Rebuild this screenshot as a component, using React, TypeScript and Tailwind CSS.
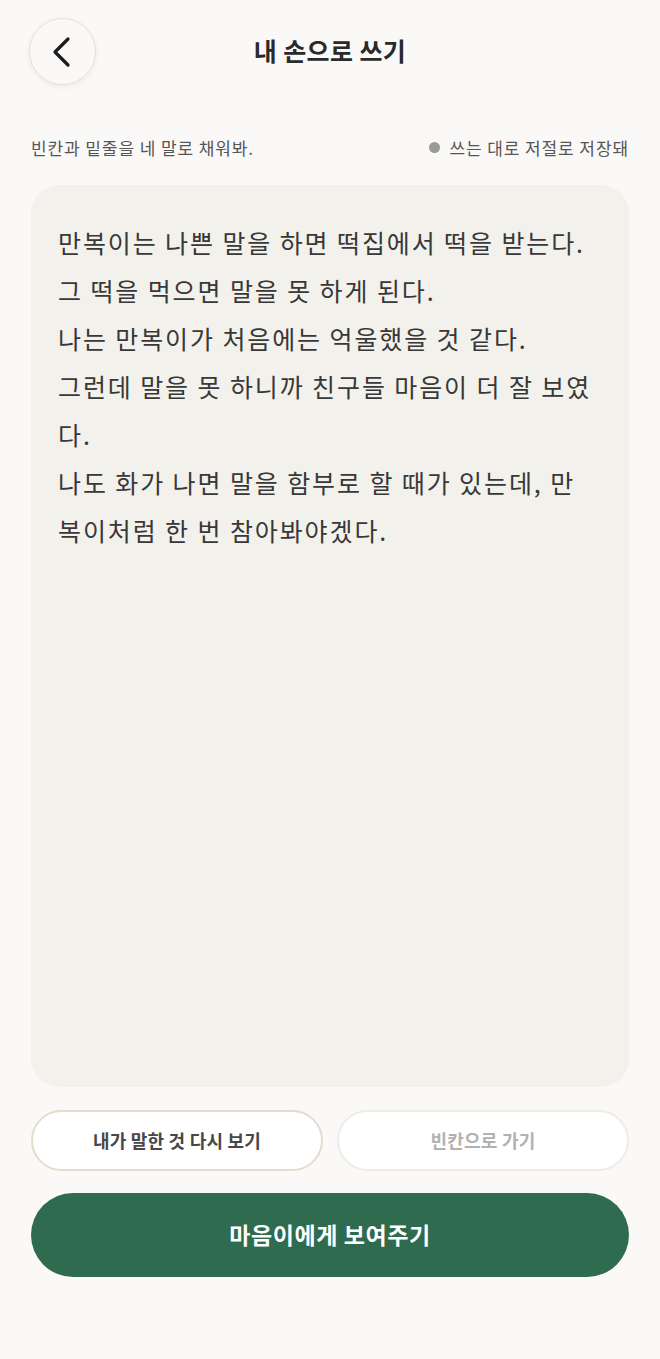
import { useState } from "react";

const INITIAL_TEXT = [
  "만복이는 나쁜 말을 하면 떡집에서 떡을 받는다.",
  "그 떡을 먹으면 말을 못 하게 된다.",
  "나는 만복이가 처음에는 억울했을 것 같다.",
  "그런데 말을 못 하니까 친구들 마음이 더 잘 보였다.",
  "나도 화가 나면 말을 함부로 할 때가 있는데, 만복이처럼 한 번 참아봐야겠다.",
].join("\n");

const FONT = { fontFamily: '"Noto Sans CJK KR", "Noto Sans", sans-serif' };

export default function App() {
  const [text, setText] = useState(INITIAL_TEXT);

  return (
    <div className="flex min-h-[1359px] flex-col bg-[#faf9f7] px-[31px] text-[#2b2b2b]" style={FONT}>
      <header className="relative flex h-[102px] items-center justify-center">
        <button
          type="button"
          aria-label="뒤로"
          className="absolute left-[-2px] top-[18px] flex h-[67px] w-[67px] items-center justify-center rounded-full border border-[#e4e1dc] bg-[#faf9f7] shadow-[0_2px_6px_rgba(0,0,0,0.06)]"
        >
          <svg width="20" height="32" viewBox="0 0 20 32" fill="none" stroke="#1c1c1c" strokeWidth="3.2" strokeLinecap="round" strokeLinejoin="round" className="mr-[2px]">
            <path d="M16 3 3 16l13 13" />
          </svg>
        </button>
        <h1 className="text-[25px] font-bold tracking-[0.4px] text-[#2a2a2a]">내 손으로 쓰기</h1>
      </header>

      <div className="mt-[33px] flex items-center justify-between text-[17px] tracking-[0.9px] text-[#555]">
        <p>빈칸과 밑줄을 네 말로 채워봐.</p>
        <p className="flex items-center gap-[9px]">
          <span className="h-[11px] w-[11px] rounded-full bg-[#9a9a98]" />
          쓰는 대로 저절로 저장돼
        </p>
      </div>

      <textarea
        value={text}
        onChange={(e) => setText(e.target.value)}
        className="mt-[24px] h-[902px] w-full resize-none rounded-[28px] bg-[#f3f1ec] py-[33px] pl-[27px] pr-[34px] text-[25px] leading-[48px] tracking-[1.9px] text-[#383838] outline-none"
        style={FONT}
      />

      <div className="mt-[23px] grid grid-cols-2 gap-[14px]">
        <button
          type="button"
          className="h-[61px] rounded-full border-2 border-[#e3ddcf] bg-white text-[18px] font-bold tracking-[0.2px] text-[#474747]"
        >
          내가 말한 것 다시 보기
        </button>
        <button
          type="button"
          disabled
          className="h-[61px] rounded-full border-2 border-[#efece6] bg-white text-[18px] font-bold tracking-[0.2px] text-[#b1b1b1]"
        >
          빈칸으로 가기
        </button>
      </div>

      <button
        type="button"
        className="mt-[22px] h-[84px] w-full rounded-full bg-[#2f6b4f] text-[23px] font-semibold tracking-[0.6px] text-white"
      >
        마음이에게 보여주기
      </button>
    </div>
  );
}
